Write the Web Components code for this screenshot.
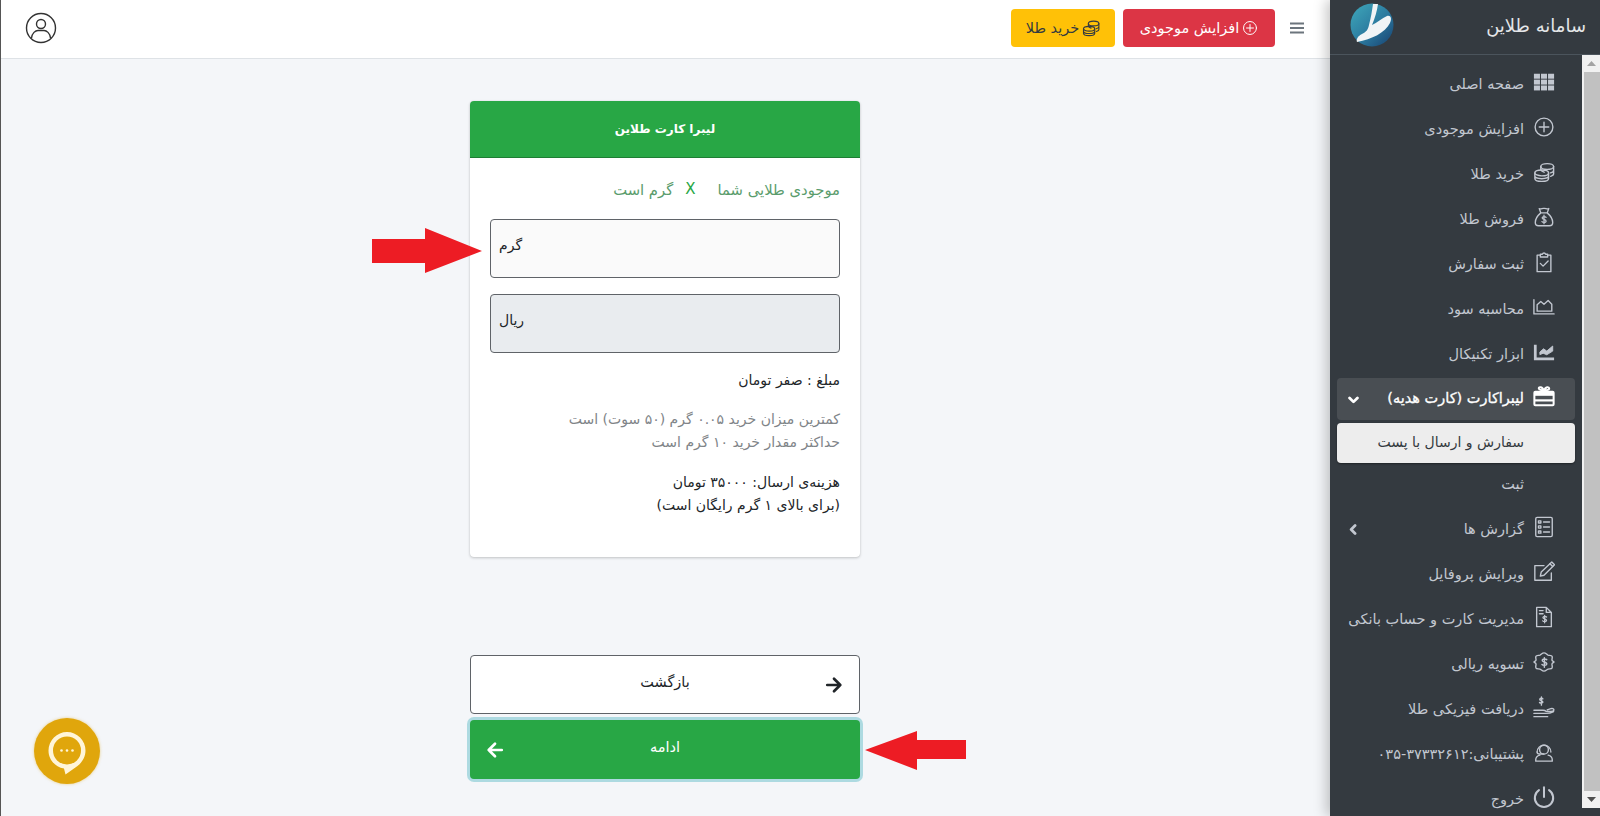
<!DOCTYPE html>
<html lang="fa">
<head>
<meta charset="utf-8">
<title>سامانه طلاین</title>
<style>
  html, body { margin: 0; height: 816px; overflow: hidden; }
  body {
    position: relative;
    display: grid;
    grid-template-columns: 1fr 270px;
    background: #f4f6f9;
    font-family: "DejaVu Sans", sans-serif;
    border-left: 1px solid #555;
    box-sizing: border-box;
  }
  .main { display: flex; flex-direction: column; min-width: 0; }
</style>
</head>
<body>
  <div class="main">
    <top-bar></top-bar>
    <gold-order>
      <order-card title="لیبرا کارت طلاین"></order-card>
      <step-button kind="back">بازگشت</step-button>
      <step-button kind="next">ادامه</step-button>
    </gold-order>
  </div>
  <side-nav></side-nav>
  <red-arrow dir="right" style="left:371px;top:228px"></red-arrow>
  <red-arrow dir="left" style="left:864px;top:731px"></red-arrow>
  <chat-fab></chat-fab>

<script>
const ICONS = {
  grid: `<g fill="currentColor" stroke="none"><rect x="1" y="3" width="6.6" height="5.4"/><rect x="8.7" y="3" width="6.6" height="5.4"/><rect x="16.4" y="3" width="6.6" height="5.4"/><rect x="1" y="9.4" width="6.6" height="5.4"/><rect x="8.7" y="9.4" width="6.6" height="5.4"/><rect x="16.4" y="9.4" width="6.6" height="5.4"/><rect x="1" y="15.8" width="6.6" height="5.4"/><rect x="8.7" y="15.8" width="6.6" height="5.4"/><rect x="16.4" y="15.8" width="6.6" height="5.4"/></g>`,
  plus: `<circle cx="12" cy="12" r="9.7"/><path d="M12 6.8v10.4M6.8 12h10.4"/>`,
  coins: `<ellipse cx="15.5" cy="6" rx="7" ry="3.2"/><path d="M8.5 6v3.4c0 1.2 1.6 2.2 3.6 2.8M22.5 6v8c0 1.2-1.4 2.2-3.2 2.7M22.5 10c0 1.4-1.6 2.4-3.4 2.9"/><ellipse cx="9.5" cy="13" rx="7.5" ry="3.2"/><path d="M2 13v6c0 1.8 3.4 3.2 7.5 3.2S17 20.800 17 19v-6M2 16.200c0 1.800 3.400 3.100 7.500 3.100S17 18 17 16.200"/>`,
  bag: `<path d="M8.500 7.500 6.800 2.800c1.700.9 3.400-.5 5.200-.2 1.800-.3 3.500 1.100 5.200.2l-1.700 4.700zM8.500 7.500h7M8.500 7.500C5 10.500 2.500 15 2.500 18c0 2.300 1.500 3.500 3.500 3.500h12c2 0 3.500-1.200 3.500-3.500 0-3-2.500-7.500-6-10.500"/><path d="M14.300 12.300c-.6-.8-3.800-1.300-4.300.5-.5 2.200 4.600 1.500 4.300 3.900-.3 1.600-3.600 1.400-4.500.3M12 10v9.300" stroke-width="1.400"/>`,
  clipboard: `<path d="M8 4.500H4.500v18h15v-18H16"/><path d="M8 3.500h2.200a1.900 1.900 0 0 1 3.600 0H16v3H8z"/><path d="m8 13.500 3 3 5.500-5.500"/>`,
  area: `<path d="M1 4v15.500h22"/><path d="M4.500 16.500V9.500l4-3.500 3.500 3 4.500-4 4 4v7.500z"/>`,
  chart: `<path d="M2.500 4v15.500h20.500" stroke-width="3" stroke-linecap="butt" stroke-linejoin="miter"/><path d="M7.500 14.500v-2.500l4-3.500 3.500 2.500 6.500-5.500v5.500l-6.500 4-3.500-1.500z" fill="currentColor" stroke-width="1"/>`,
  gift: `<path d="M12 7C10 5 6.500 6 6.300 3.800 6.200 1.800 10.500 1.500 12 6.500c1.500-5 5.800-4.700 5.700-2.300C17.500 6 14 5 12 7z" stroke-width="2.200"/><rect x="1.500" y="7.500" width="21" height="14.500" rx="1" stroke-width="2.200"/><path d="M1.500 10h21" stroke-width="3.600" stroke-linecap="butt"/><path d="M1.500 16.800h21" stroke-width="2.400" stroke-linecap="butt"/>`,
  list: `<rect x="3" y="1.500" width="18" height="21" rx="1.500"/><path d="M11.500 6.500H18M11.500 12H18M11.500 17.500H18"/><rect x="6" y="5.300" width="2.600" height="2.400"/><rect x="6" y="10.800" width="2.600" height="2.400"/><rect x="6" y="16.300" width="2.600" height="2.400"/>`,
  pencil: `<path d="M20 13v8H2V5h10"/><path d="M8 16.500 9 12 20.500 1l3 3L12 15.500z"/><path d="m18.500 3 3 3"/>`,
  invoice: `<path d="M14.500 1.500H4v21h16V7zM14.500 1.500V7H20M7 5h4M7 8.500h4"/><path d="M14.800 12c-.7-.8-3.500-1.100-4 .5-.4 1.900 4.300 1.300 4 3.400-.3 1.500-3.300 1.300-4.200.3M12.700 10.300v8" stroke-width="1.400"/>`,
  badge: `<path d="M12 2c2.100 0 2.800 1.800 4.400 2.400 1.800.6 3.700-.1 4.400 1.400.7 1.700-.3 2.800-.1 4.200.2 1.300 2.200 1.300 2.200 2s-2 .9-2.200 2.200c-.2 1.400.8 2.500.1 4.200-.7 1.500-2.600.8-4.400 1.400-1.600.6-2.300 2.200-4.400 2.200s-2.800-1.600-4.400-2.200c-1.800-.6-3.700.1-4.400-1.400-.7-1.700.3-2.800.1-4.200-.2-1.300-2.200-1.500-2.200-2.200s2-.7 2.200-2c.2-1.400-.8-2.500-.1-4.200.7-1.500 2.600-.8 4.400-1.400C9.200 3.800 9.900 2 12 2z"/><path d="M15 9.500c-.7-1-4.400-1.400-5 .6-.5 2.300 5.400 1.600 5 4.200-.3 1.800-4.200 1.600-5.200.4M12.400 7.300v10.400" stroke-width="1.600"/>`,
  hand: `<path d="M1 15.500h10c1.500 0 2.500.4 3.500 1.300h5c1.500 0 3.300-.6 3.300-1.800 0-1.200-1.800-1.700-3.300-1.200l-4 1.300M1 19h13c3 0 5.500-.4 8.500-2M1 22.500h15"/><path d="M10.800 3.200c-.5-.9-3.200-1.200-3.500.4-.3 1.800 3.700 1.200 3.500 3.200-.2 1.400-3 1.200-3.700.3M9.200 1v9" stroke-width="1.500"/>`,
  headset: `<path d="M4.500 12a7.500 7.500 0 1 1 15 0"/><circle cx="12" cy="9.500" r="4.800"/><path d="M4.500 12c0 1.300 1 2.200 2.400 2.200h5"/><path d="M7.500 15.500C4.500 16.300 3 18 3 20.500v1.500h18v-1.500c0-2.500-1.500-4.200-4.500-5"/>`,
  power: `<path d="M12 1.500v10.500" stroke-width="2.200"/><path d="M6.500 4.500a10 10 0 1 0 11 0" stroke-width="2.200"/>`
}

const svgIcon = (name, size) =>
  `<svg width="${size}" height="${size}" viewBox="0 0 24 24" fill="none" stroke="currentColor" stroke-width="1.500" stroke-linecap="round" stroke-linejoin="round">${ICONS[name]}</svg>`

class TopBar extends HTMLElement {
  constructor() {
    super()
    this.attachShadow({ mode: "open" })
    this.shadowRoot.innerHTML = `
    <style>
      :host {
        display: flex;
        direction: rtl;
        align-items: center;
        height: 59px;
        box-sizing: border-box;
        background: #fff;
        border-bottom: 1px solid #dee2e6;
        padding: 0 24px 3px 24px;
        font-size: 14.5px;
      }
      .burger { width: 16px; height: 12px; margin-left: 14px; margin-right: 1px; color: #6c757d; }
      .btn {
        display: flex;
        align-items: center;
        justify-content: center;
        gap: 3px;
        height: 38px;
        border-radius: 4px;
        box-sizing: border-box;
      }
      .red { width: 152px; background: #dc3545; color: #fff; margin-left: 8px; }
      .yellow { width: 104px; background: #ffc107; color: #343a40; }
      .user { margin-right: auto; margin-left: 0; color: #333; display: flex; }
    </style>
    <svg class="burger" viewBox="0 0 16 12"><path d="M1 1.500h14M1 6h14M1 10.500h14" stroke="currentColor" stroke-width="1.800"/></svg>
    <div class="btn red">${svgIcon("plus", 16)}<span>افزایش موجودی</span></div>
    <div class="btn yellow">${svgIcon("coins", 18)}<span>خرید طلا</span></div>
    <div class="user">
      <svg width="32" height="32" viewBox="0 0 32 32" fill="none" stroke="currentColor" stroke-width="1.400">
        <circle cx="16" cy="16" r="14.500"/><circle cx="16" cy="12" r="4.500"/>
        <path d="M6.500 26c.5-5 4-7.500 6.500-7.500h6c2.500 0 6 2.500 6.500 7.500"/>
      </svg>
    </div>`
  }
}
customElements.define("top-bar", TopBar)

class GoldOrder extends HTMLElement {
  constructor() {
    super()
    this.attachShadow({ mode: "open" })
    this.shadowRoot.innerHTML = `
    <style>
      :host {
        display: flex;
        flex-direction: column;
        align-items: center;
        padding: 42px 1px 0 0;
        direction: rtl;
      }
      ::slotted(order-card) { margin-bottom: 98px; }
      ::slotted(step-button) { margin-bottom: 6px; }
    </style>
    <slot></slot>`
  }
}
customElements.define("gold-order", GoldOrder)

class OrderCard extends HTMLElement {
  constructor() {
    super()
    this.attachShadow({ mode: "open" })
    this.shadowRoot.innerHTML = `
    <style>
      :host {
        display: block;
        width: 390px;
        height: 456px;
        background: #fff;
        border-radius: 4px;
        box-shadow: 0 0 1px rgba(0,0,0,.125), 0 1px 3px rgba(0,0,0,.2);
        font-size: 14px;
        color: #212529;
        overflow: hidden;
      }
      header {
        height: 57px;
        display: flex;
        align-items: center;
        justify-content: center;
        background: #28a745;
        border-bottom: 1px solid #1e7e34;
        box-sizing: border-box;
        color: #fff;
        font-weight: bold;
        font-size: 12px;
      }
      .body { padding: 20px 20px 0; }
      .balance { display: flex; color: #5a9c6c; height: 22px; align-items: center; margin-bottom: 19px; font-size: 14.8px; }
      .balance b { font-weight: normal; color: #28a745; font-size: 15px; margin: 0 22px 0 12px; }
      .box {
        height: 59px;
        box-sizing: border-box;
        border: 1px solid #5f6368;
        border-radius: 4px;
        background: #fafafa;
        display: flex;
        justify-content: flex-end;
        padding: 0 8px 7px;
        align-items: center;
        margin-bottom: 16px;
      }
      .box.off { background: #e9ecef; }
      .sum { margin: 16px 0 17px; line-height: 22px; }
      .hint { color: #808488; line-height: 23px; margin-bottom: 17px; }
      .cost { line-height: 23px; }
    </style>
    <header></header>
    <div class="body">
      <div class="balance"><span>موجودی طلایی شما</span><b>X</b><span>گرم است</span></div>
      <div class="box">گرم</div>
      <div class="box off">ریال</div>
      <div class="sum">مبلغ : صفر تومان</div>
      <div class="hint">کمترین میزان خرید ۰.۰۵ گرم (۵۰ سوت) است<br>حداکثر مقدار خرید ۱۰ گرم است</div>
      <div class="cost">هزینه‌ی ارسال: ۳۵۰۰۰ تومان<br>(برای بالای ۱ گرم رایگان است)</div>
    </div>`
    this.shadowRoot.querySelector("header").textContent = this.getAttribute("title")
    this.removeAttribute("title")
  }
}
customElements.define("order-card", OrderCard)

class StepButton extends HTMLElement {
  constructor() {
    super()
    this.attachShadow({ mode: "open" })
    const next = this.getAttribute("kind") === "next"
    this.shadowRoot.innerHTML = `
    <style>
      :host {
        display: grid;
        grid-template-columns: 50px 1fr 50px;
        align-items: center;
        justify-items: center;
        width: 390px;
        height: 59px;
        box-sizing: border-box;
        border-radius: 4px;
        font-size: 14.5px;
        ${next
          ? "background:#28a745;color:#fff;box-shadow:0 0 0 3px rgba(40,167,180,.35);"
          : "background:#fff;color:#212529;border:1px solid #5f6368;"}
      }
      svg { grid-column: ${next ? 3 : 1}; grid-row: 1; }
      span { grid-column: 2; grid-row: 1; padding-bottom: 6px; }
    </style>
    <svg width="18" height="18" viewBox="0 0 20 20" fill="none" stroke="currentColor" stroke-width="3" stroke-linecap="round" stroke-linejoin="round">
      <path d="${next ? "M17.500 10H3M10 3l-7 7 7 7" : "M2.500 10H17M10 3l7 7-7 7"}"/>
    </svg>
    <span><slot></slot></span>`
  }
}
customElements.define("step-button", StepButton)

class NavItem extends HTMLElement {
  constructor() {
    super()
    this.attachShadow({ mode: "open" })
    const icon = this.getAttribute("icon")
    const caret = this.getAttribute("caret")
    const carets = { down: "M2 5l5 5 5-5", left: "M9 2 4 7l5 5" }
    this.shadowRoot.innerHTML = `
    <style>
      :host {
        display: flex;
        align-items: center;
        height: 45px;
        color: #c2c7d0;
        font-size: 14.5px;
        box-sizing: border-box;
      }
      :host([active]) {
        height: 42px;
        margin: 1px 0 3px;
        background: #494e53;
        border-radius: 4px;
        color: #fff;
        -webkit-text-stroke: .3px #fff;
      }
      :host([sub]) {
        height: 40px;
        background: #ededed;
        color: #343a40;
        border-radius: 4px;
        font-size: 14px;
        box-shadow: 0 1px 2px rgba(0,0,0,.4);
      }
      :host([plain]) { height: 44px; }
      .ic { width: 24px; height: 24px; margin: 0 19px 0 8px; flex: none; display: flex; align-items: center; justify-content: center; position: relative; top: -3px; }
      .tx { position: relative; top: -1px; }
      .caret { margin-right: auto; margin-left: 11px; display: flex; }
      :host([sub]) .ic, :host([plain]) .ic { visibility: hidden; }
    </style>
    <span class="ic">${icon ? svgIcon(icon, 22) : ""}</span>
    <span class="tx"><slot></slot></span>
    ${caret ? `<span class="caret"><svg width="11" height="11" viewBox="0 0 14 14" fill="none" stroke="currentColor" stroke-width="3.500" stroke-linecap="round" stroke-linejoin="round"><path d="${carets[caret]}"/></svg></span>` : ""}`
  }
}
customElements.define("nav-item", NavItem)

class SideNav extends HTMLElement {
  constructor() {
    super()
    this.attachShadow({ mode: "open" })
    this.shadowRoot.innerHTML = `
    <style>
      :host {
        display: grid;
        grid-template-columns: 252px 18px;
        grid-template-rows: 55px 753px 8px;
        height: 816px;
        background: #343a40;
        box-shadow: -4px 0 12px rgba(0,0,0,.22);
        position: relative;
        direction: ltr;
      }
      .brand {
        grid-column: 1 / 3;
        display: flex;
        direction: rtl;
        align-items: center;
        justify-content: space-between;
        padding: 0 14px 4px 20px;
        border-bottom: 1px solid #4b545c;
        color: #e4e6e8;
        font-size: 18px;
      }
      .logo { display: flex; }
      nav {
        grid-row: 2 / 4;
        direction: rtl;
        padding: 7px 7px 0;
        overflow: hidden;
      }
      .digits { letter-spacing: 1.2px; }
      .bar {
        background: #f1f1f1;
        display: flex;
        flex-direction: column;
        align-items: stretch;
      }
      .end { height: 17px; display: flex; align-items: center; justify-content: center; }
      .thumb { flex: 1; background: #c1c1c1; margin-left: 2px; }
    </style>
    <div class="brand">
      <span>سامانه طلاین</span>
      <span class="logo">
        <svg width="44" height="44" viewBox="0 0 44 44">
          <defs><linearGradient id="g" x1="0" y1="0" x2="1" y2="1"><stop offset="0" stop-color="#3fa9bb"/><stop offset=".55" stop-color="#2b7a9f"/><stop offset="1" stop-color="#17406f"/></linearGradient></defs>
          <circle cx="22" cy="22" r="21.500" fill="url(#g)"/>
          <path d="M23 1h5c-1 7-3 14-6 21 5-2 10-7 15-9 4-1 5 3 3 7C35 30 22 36 7 39c-1-3 1-6 5-8 4-2 6-4 7-9 2-8 3-14 4-21z" fill="#f0f4f6"/>
        </svg>
      </span>
    </div>
    <nav>
      <nav-item icon="grid">صفحه اصلی</nav-item>
      <nav-item icon="plus">افزایش موجودی</nav-item>
      <nav-item icon="coins">خرید طلا</nav-item>
      <nav-item icon="bag">فروش طلا</nav-item>
      <nav-item icon="clipboard">ثبت سفارش</nav-item>
      <nav-item icon="area">محاسبه سود</nav-item>
      <nav-item icon="chart">ابزار تکنیکال</nav-item>
      <nav-item icon="gift" caret="down" active>لیبراکارت (کارت هدیه)</nav-item>
      <nav-item sub>سفارش و ارسال با پست</nav-item>
      <nav-item plain>ثبت</nav-item>
      <nav-item icon="list" caret="left">گزارش ها</nav-item>
      <nav-item icon="pencil">ویرایش پروفایل</nav-item>
      <nav-item icon="invoice">مدیریت کارت و حساب بانکی</nav-item>
      <nav-item icon="badge">تسویه ریالی</nav-item>
      <nav-item icon="hand">دریافت فیزیکی طلا</nav-item>
      <nav-item icon="headset">پشتیبانی:<span class="digits" dir="ltr">۰۳۵-۳۷۳۳۲۶۱۲</span></nav-item>
      <nav-item icon="power">خروج</nav-item>
    </nav>
    <div class="bar">
      <div class="end"><svg width="9" height="5" viewBox="0 0 9 5"><path d="M4.500 0 9 5H0z" fill="#a3a3a3"/></svg></div>
      <div class="thumb"></div>
      <div class="end"><svg width="9" height="5" viewBox="0 0 9 5"><path d="M4.500 5 9 0H0z" fill="#505050"/></svg></div>
    </div>`
  }
}
customElements.define("side-nav", SideNav)

class RedArrow extends HTMLElement {
  constructor() {
    super()
    this.attachShadow({ mode: "open" })
    const right = this.getAttribute("dir") === "right"
    this.removeAttribute("dir")
    this.shadowRoot.innerHTML = `
    <style>:host { position: absolute; display: block; line-height: 0; }</style>
    ${right
      ? `<svg width="110" height="46" viewBox="0 0 110 46"><path d="M0 11h53V0l57 23-57 22V35H0z" fill="#ed1c24"/></svg>`
      : `<svg width="102" height="39" viewBox="0 0 102 39"><path d="M0 19 52 0v9h49v19H52v11z" fill="#ed1c24"/></svg>`}`
  }
}
customElements.define("red-arrow", RedArrow)

class ChatFab extends HTMLElement {
  constructor() {
    super()
    this.attachShadow({ mode: "open" })
    this.shadowRoot.innerHTML = `
    <style>
      :host {
        position: absolute;
        left: 33px;
        top: 718px;
        width: 66px;
        height: 66px;
        border-radius: 50%;
        background: #e0a60c;
        box-shadow: 0 0 3px rgba(224,166,12,.5);
        display: block;
        line-height: 0;
      }
    </style>
    <svg width="66" height="66" viewBox="0 0 66 66">
      <path d="M30 50.500C21 49 14.500 41.500 14.500 32.500a18.500 18.500 0 0 1 37 0c0 7-4 12.500-8 15.500l-12 8.500z" fill="#fff5d8"/>
      <circle cx="33" cy="32.500" r="14" fill="#e0a60c"/>
      <circle cx="27.500" cy="32.500" r="1.300" fill="#fff5d8"/><circle cx="33" cy="32.500" r="1.300" fill="#fff5d8"/><circle cx="38.500" cy="32.500" r="1.300" fill="#fff5d8"/>
    </svg>`
  }
}
customElements.define("chat-fab", ChatFab)
</script>
</body>
</html>
